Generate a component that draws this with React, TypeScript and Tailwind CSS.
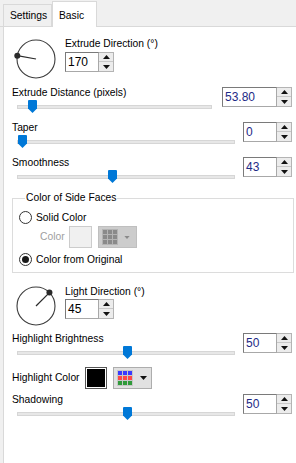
import React from 'react';

/* ── small pieces ─────────────────────────────────────────── */

function Dial({ angle }: { angle: number }) {
  const rad = (angle * Math.PI) / 180;
  const dx = 20 + 19 * Math.cos(rad);
  const dy = 20 - 19 * Math.sin(rad);
  return (
    <svg width="40" height="40" viewBox="0 0 40 40" className="overflow-visible shrink-0">
      <circle cx="20" cy="20" r="19" fill="none" stroke="#3c3c3c" strokeWidth="1.1" />
      <line x1="20" y1="20" x2={dx} y2={dy} stroke="#2a2a2a" strokeWidth="1.2" />
      <circle cx={dx} cy={dy} r="3" fill="#2a2a2a" />
    </svg>
  );
}

function Arrow({ up }: { up?: boolean }) {
  return (
    <svg width="7" height="4" viewBox="0 0 7 4">
      <path d={up ? 'M0 4 L3.5 0 L7 4 Z' : 'M0 0 L7 0 L3.5 4 Z'} fill="#111" />
    </svg>
  );
}

function SpinBox({ value, w = 34, blue }: { value: string; w?: number; blue?: boolean }) {
  return (
    <div className="flex h-[20px] shrink-0">
      <div
        className={`h-full border border-[#7a7a7a] border-r-[#a8a8a8] border-b-[#a8a8a8] bg-white pl-[2px] leading-[18px] text-[12px] ${
          blue ? 'text-[#1e2a86]' : 'text-black'
        }`}
        style={{ width: w }}
      >
        {value}
      </div>
      <div className="flex w-[15px] flex-col border border-l-0 border-[#b4b4b4] bg-[#ececec]">
        <div className="flex h-1/2 items-center justify-center border-b border-[#c8c8c8]">
          <Arrow up />
        </div>
        <div className="flex h-1/2 items-center justify-center">
          <Arrow />
        </div>
      </div>
    </div>
  );
}

function Thumb() {
  return (
    <svg width="9" height="13" viewBox="0 0 9 13">
      <path d="M1 0 H8 Q9 0 9 1 V8.5 L4.5 13 L0 8.5 V1 Q0 0 1 0 Z" fill="#0078d7" />
    </svg>
  );
}

function SliderRow({
  label,
  value,
  thumbX,
  trackEnd,
  boxW = 34,
  className = '',
}: {
  label: string;
  value: string;
  thumbX: number;
  trackEnd: number;
  boxW?: number;
  className?: string;
}) {
  return (
    <div className={`flex items-start justify-between pr-[4px] ${className}`}>
      <div>
        <div className="ml-[8px] h-[13px] leading-[13px]">{label}</div>
        <div className="relative ml-[13px] h-[15px]" style={{ width: trackEnd - 17 }}>
          <div className="absolute left-0 right-0 top-[6px] h-[4px] border border-[#d6d6d6] bg-[#e7e7e7]" />
          <div className="absolute top-[1px]" style={{ left: thumbX - 17 }}>
            <Thumb />
          </div>
        </div>
      </div>
      <div className="mt-[1px]">
        <SpinBox value={value} w={boxW} blue />
      </div>
    </div>
  );
}

function Radio({ checked }: { checked?: boolean }) {
  return (
    <div className="flex h-[13px] w-[13px] shrink-0 items-center justify-center rounded-full border border-[#333] bg-white">
      {checked && <div className="h-[7px] w-[7px] rounded-full bg-[#1a1a1a]" />}
    </div>
  );
}

function Grid({ colors, line }: { colors: string[]; line: string }) {
  return (
    <div className="grid grid-cols-3 gap-[1px] p-[1px]" style={{ background: line }}>
      {colors.map((c, i) => (
        <div key={i} className="h-[4px] w-[4px]" style={{ background: c }} />
      ))}
    </div>
  );
}

/* ── page ────────────────────────────────────────────────── */

export default function App() {
  const grey = Array(9).fill('#8a8a8a');
  const rgb = [
    '#3a3aff', '#3a3aff', '#3a3aff',
    '#ff4848', '#ff4848', '#ff4848',
    '#2f9a3a', '#2f9a3a', '#2f9a3a',
  ];

  return (
    <div
      className="h-[463px] w-[296px] overflow-hidden bg-[#f0f0f0] text-[10.3px] text-black"
      style={{ fontFamily: '"Liberation Sans", Arial, sans-serif' }}
    >
      {/* tabs */}
      <div className="flex h-[27px] items-end border-b border-[#d9d9d9] pl-[3px]">
        <div className="h-[22px] w-[49px] border border-b-0 border-[#d9d9d9] bg-[#f0f0f0] pl-[6px] pt-[4px] leading-[13px]">
          Settings
        </div>
        <div className="relative z-10 -mb-px h-[26px] w-[45px] border border-b-0 border-[#d9d9d9] bg-white pl-[6px] pt-[7px] leading-[13px]">
          Basic
        </div>
      </div>

      {/* panel */}
      <div className="ml-[3px] h-[436px] w-[293px] border-l border-[#d9d9d9] bg-white">
        {/* extrude direction */}
        <div className="flex items-start pt-[9px]">
          <div className="ml-[12px] mt-[3px]">
            <Dial angle={170} />
          </div>
          <div className="ml-[9px]">
            <div className="h-[15px] leading-[15px]">Extrude Direction (°)</div>
            <div className="mt-[1px]">
              <SpinBox value="170" />
            </div>
          </div>
        </div>

        <SliderRow className="mt-[7px]" label="Extrude Distance (pixels)" value="53.80" thumbX={28} trackEnd={212} boxW={55} />
        <SliderRow className="mt-[7px]" label="Taper" value="0" thumbX={18} trackEnd={235} />
        <SliderRow className="mt-[7px]" label="Smoothness" value="43" thumbX={108} trackEnd={235} />

        {/* color of side faces */}
        <fieldset className="ml-[8px] mt-[7px] w-[282px] border border-[#dcdcdc] pb-[6px] pl-[6px]">
          <legend className="ml-[6px] px-[1px] leading-[14px]">Color of Side Faces</legend>
          <div className="mt-[6px] flex h-[13px] items-center gap-[4px]">
            <Radio />
            <span className="leading-[13px]">Solid Color</span>
          </div>
          <div className="mt-[2px] flex h-[22px] items-center">
            <span className="ml-[21px] w-[29px] text-[#a0a0a0]">Color</span>
            <div className="h-[22px] w-[23px] border border-[#cccccc] bg-[#f0f0f0]" />
            <div className="ml-[6px] flex h-[22px] w-[39px] items-center border border-[#bfbfbf] bg-[#cccccc] pl-[3px]">
              <Grid colors={grey} line="#b4b4b4" />
              <svg width="6" height="3" viewBox="0 0 7 4" className="ml-[6px]">
                <path d="M0 0 L7 0 L3.5 4 Z" fill="#8a8a8a" />
              </svg>
            </div>
          </div>
          <div className="mt-[5px] flex h-[13px] items-center gap-[4px]">
            <Radio checked />
            <span className="leading-[13px]">Color from Original</span>
          </div>
        </fieldset>

        {/* light direction */}
        <div className="mt-[11px] flex items-start">
          <div className="ml-[12px] mt-[2px]">
            <Dial angle={45} />
          </div>
          <div className="ml-[9px]">
            <div className="h-[15px] leading-[15px]">Light Direction (°)</div>
            <SpinBox value="45" />
          </div>
        </div>

        <SliderRow className="mt-[6px]" label="Highlight Brightness" value="50" thumbX={123} trackEnd={235} />

        {/* highlight color */}
        <div className="mt-[7px] flex h-[22px] items-center">
          <span className="ml-[8px] w-[73px]">Highlight Color</span>
          <div className="h-[22px] w-[22px] border border-[#555] bg-black shadow-[inset_0_0_0_1px_#fff]" />
          <div className="ml-[6px] flex h-[22px] w-[39px] items-center border border-[#adadad] bg-[#e1e1e1] pl-[3px]">
            <Grid colors={rgb} line="#c8c8c8" />
            <svg width="7" height="4" viewBox="0 0 7 4" className="ml-[7px]">
              <path d="M0 0 L7 0 L3.5 4 Z" fill="#111" />
            </svg>
          </div>
        </div>

        <SliderRow className="mt-[4px]" label="Shadowing" value="50" thumbX={123} trackEnd={235} />
      </div>
    </div>
  );
}
